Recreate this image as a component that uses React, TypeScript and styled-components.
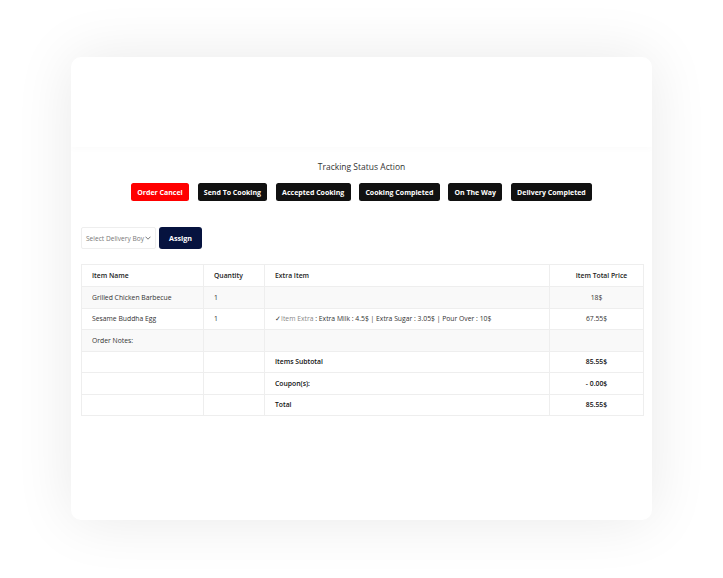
import React from "react";
import styled, { createGlobalStyle } from "styled-components";

const GlobalStyle = createGlobalStyle`
  html, body {
    margin: 0;
    padding: 0;
    background: #ffffff;
    font-family: "Open Sans", "Noto Sans", sans-serif;
    color: #222;
  }
  * { box-sizing: border-box; }
`;

const Page = styled.div`
  width: 723px;
  height: 578px;
  padding: 57px 0 0 71px;
`;

const Card = styled.div`
  width: 581px;
  height: 463px;
  background: #fff;
  border-radius: 10px;
  box-shadow: 0 0 60px rgba(0, 0, 0, 0.09);
  display: flex;
  flex-direction: column;
  overflow: hidden;
`;

const Header = styled.div`
  height: 90px;
  box-shadow: 0 3px 6px rgba(0, 0, 0, 0.015);
`;

const StatusBlock = styled.div`
  display: flex;
  flex-direction: column;
  align-items: center;
  padding-top: 14px;
`;

const Title = styled.div`
  font-size: 8.5px;
  color: #333;
  line-height: 12px;
`;

const ButtonRow = styled.div`
  display: flex;
  gap: 8.5px;
  margin-top: 10px;
`;

const StatusButton = styled.button<{ danger?: boolean }>`
  height: 18px;
  padding: 0 6.3px;
  border: none;
  border-radius: 2.5px;
  background: ${({ danger }) => (danger ? "#ff0000" : "#111111")};
  color: #fff;
  font-family: "Open Sans", sans-serif;
  font-size: 7px;
  font-weight: 700;
  cursor: pointer;
`;

const AssignRow = styled.div`
  display: flex;
  align-items: center;
  gap: 3px;
  padding: 26px 10px 0;
`;

const SelectBox = styled.div`
  width: 75px;
  height: 22px;
  border: 1px solid #eeeeee;
  border-radius: 2px;
  display: flex;
  align-items: center;
  justify-content: space-between;
  padding: 0 4px 0 4px;
  font-size: 6.6px;
  color: #777;
`;

const AssignButton = styled.button`
  width: 43px;
  height: 22px;
  border: none;
  border-radius: 3px;
  background: #06133f;
  color: #fff;
  font-family: "Open Sans", sans-serif;
  font-size: 7.2px;
  font-weight: 700;
`;

const TableWrap = styled.div`
  padding: 15px 9px 0 10px;
`;

const Table = styled.table`
  width: 562px;
  border-collapse: collapse;
  table-layout: fixed;
  font-size: 6.8px;
  color: #333;
`;

const Th = styled.th<{ center?: boolean }>`
  height: 22px;
  border: 1px solid #eeeeee;
  text-align: ${({ center }) => (center ? "center" : "left")};
  padding: 0 0 0 10px;
  font-weight: 600;
  color: #222;
`;

const Row = styled.tr<{ shaded?: boolean; noTop?: boolean }>`
  background: ${({ shaded }) => (shaded ? "#f9f9f9" : "#fff")};
  & > td {
    ${({ noTop }) => (noTop ? "border-top: none;" : "")}
  }
`;

const Td = styled.td<{ center?: boolean; strong?: boolean }>`
  height: 21.5px;
  border: 1px solid #eeeeee;
  padding: 0 0 0 ${({ center }) => (center ? "0" : "10px")};
  text-align: ${({ center }) => (center ? "center" : "left")};
  font-weight: ${({ strong }) => (strong ? 600 : 400)};
  color: ${({ strong }) => (strong ? "#111" : "#333")};
  white-space: nowrap;
`;

const Muted = styled.span`
  color: #888;
`;

const Chevron = () => (
  <svg width="6" height="4" viewBox="0 0 6 4">
    <path d="M0.5 0.7 L3 3.2 L5.5 0.7" fill="none" stroke="#555" strokeWidth="0.8" />
  </svg>
);

const statuses = [
  "Send To Cooking",
  "Accepted Cooking",
  "Cooking Completed",
  "On The Way",
  "Delivery Completed",
];

export default function App() {
  return (
    <>
      <GlobalStyle />
      <Page>
        <Card>
          <Header />
          <StatusBlock>
            <Title>Tracking Status Action</Title>
            <ButtonRow>
              <StatusButton danger>Order Cancel</StatusButton>
              {statuses.map((s) => (
                <StatusButton key={s}>{s}</StatusButton>
              ))}
            </ButtonRow>
          </StatusBlock>
          <AssignRow>
            <SelectBox>
              <span>Select Delivery Boy</span>
              <Chevron />
            </SelectBox>
            <AssignButton>Assign</AssignButton>
          </AssignRow>
          <TableWrap>
            <Table>
              <colgroup>
                <col style={{ width: 122 }} />
                <col style={{ width: 61 }} />
                <col style={{ width: 285 }} />
                <col style={{ width: 94 }} />
              </colgroup>
              <thead>
                <tr>
                  <Th>Item Name</Th>
                  <Th>Quantity</Th>
                  <Th>Extra Item</Th>
                  <Th center>Item Total Price</Th>
                </tr>
              </thead>
              <tbody>
                <Row shaded>
                  <Td>Grilled Chicken Barbecue</Td>
                  <Td>1</Td>
                  <Td></Td>
                  <Td center>18$</Td>
                </Row>
                <Row>
                  <Td>Sesame Buddha Egg</Td>
                  <Td>1</Td>
                  <Td>
                    ✓<Muted>Item Extra</Muted> : Extra Milk : 4.5$ | Extra Sugar : 3.05$ | Pour Over : 10$
                  </Td>
                  <Td center>67.55$</Td>
                </Row>
                <Row shaded>
                  <Td>Order Notes:</Td>
                  <Td></Td>
                  <Td></Td>
                  <Td></Td>
                </Row>
                <Row>
                  <Td></Td>
                  <Td></Td>
                  <Td strong>Items Subtotal</Td>
                  <Td center strong>85.55$</Td>
                </Row>
                <Row noTop>
                  <Td></Td>
                  <Td></Td>
                  <Td strong>Coupon(s):</Td>
                  <Td center strong>- 0.00$</Td>
                </Row>
                <Row>
                  <Td></Td>
                  <Td></Td>
                  <Td strong>Total</Td>
                  <Td center strong>85.55$</Td>
                </Row>
              </tbody>
            </Table>
          </TableWrap>
        </Card>
      </Page>
    </>
  );
}
